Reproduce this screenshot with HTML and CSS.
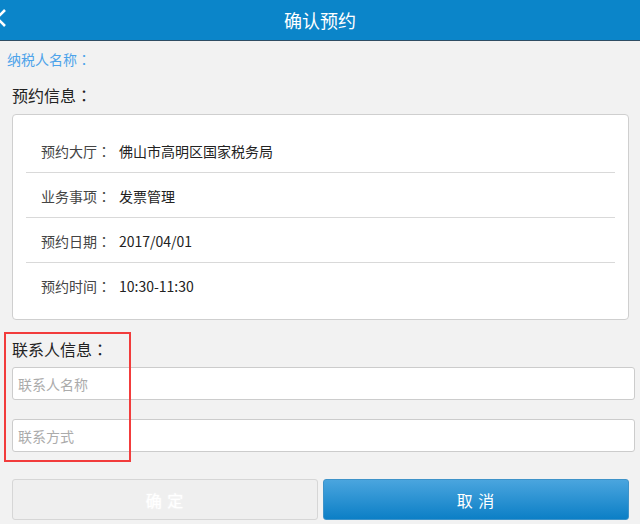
FILE: index.html
```html
<!DOCTYPE html>
<html lang="zh-CN">
<head>
<meta charset="utf-8">
<title>确认预约</title>
<link rel="stylesheet" href="styles.css">
</head>
<body>
<header class="topbar">
  <span class="back">
    <svg width="10" height="40" viewBox="0 0 10 40"><polyline points="5,10 -3,18 5,26" fill="none" stroke="#fff" stroke-width="2.6"/></svg>
  </span>
  <h1 class="title">确认预约</h1>
  <span></span>
</header>
<main class="page">
  <div class="taxpayer">纳税人名称<span class="colon">：</span></div>
  <div class="section-title">预约信息<span class="colon">：</span></div>
  <div class="card">
    <div class="row"><span class="label">预约大厅<span class="colon">：</span></span><span class="value">佛山市高明区国家税务局</span></div>
    <div class="row"><span class="label">业务事项<span class="colon">：</span></span><span class="value">发票管理</span></div>
    <div class="row"><span class="label">预约日期<span class="colon">：</span></span><span class="value">2017/04/01</span></div>
    <div class="row"><span class="label">预约时间<span class="colon">：</span></span><span class="value">10:30-11:30</span></div>
  </div>
  <div class="contact">
    <div class="section-title contact-title">联系人信息<span class="colon">：</span></div>
    <input class="field" type="text" placeholder="联系人名称">
    <input class="field field-second" type="text" placeholder="联系方式">
    <div class="highlight"></div>
  </div>
  <div class="actions">
    <button class="btn btn-ok" type="button">确 定</button>
    <button class="btn btn-cancel" type="button">取 消</button>
  </div>
</main>
</body>
</html>
```
FILE: styles.css
```css
* { box-sizing: border-box; }
html, body {
  margin: 0;
  padding: 0;
  background: #f2f2f2;
  font-family: "Noto Sans CJK SC", "Noto Sans", "Liberation Sans", sans-serif;
  width: 640px;
  height: 524px;
  overflow: hidden;
}
.colon {
  display: inline-block;
  width: 1em;
  text-align: center;
  font-family: "Noto Sans CJK TC", "Noto Sans CJK SC", sans-serif;
  font-feature-settings: "locl" 0;
}
.topbar {
  height: 41px;
  background: #0b85c9;
  border-bottom: 1px solid #2f4d63;
  display: grid;
  grid-template-columns: 40px 1fr 40px;
  align-items: center;
}
.back { display: block; height: 40px; }
.back svg { display: block; }
.title {
  margin: 0;
  text-align: center;
  color: #fff;
  font-size: 18px;
  font-weight: normal;
  line-height: 40px;
}
.page { display: flex; flex-direction: column; }
.taxpayer {
  margin-top: 8px;
  padding-left: 7px;
  font-size: 14px;
  line-height: 20px;
  color: #4da3ea;
}
.section-title {
  margin-top: 15px;
  padding-left: 12px;
  font-size: 16px;
  line-height: 22px;
  color: #222;
}
.card {
  margin: 8px 11px 0 12px;
  background: #fff;
  border: 1px solid #cfcfcf;
  border-radius: 4px;
  padding: 13px 13px 12px;
}
.row {
  height: 45px;
  border-bottom: 1px solid #d9d9d9;
  display: flex;
  align-items: center;
  padding-left: 15px;
  padding-top: 1px;
  font-size: 14px;
}
.row:last-child { border-bottom: none; height: 44px; }
.label { width: 78px; color: #444; }
.value { color: #222; }
.contact {
  position: relative;
  display: flex;
  flex-direction: column;
}
.contact-title { margin-top: 18px; }
.field {
  margin: 7px 5px 0 12px;
  height: 33px;
  border: 1px solid #cccccc;
  border-radius: 3px;
  background: #fff;
  padding: 0 5px;
  font-family: inherit;
  font-size: 14px;
  color: #333;
  outline: none;
}
.field::placeholder { color: #ababab; }
.field-second { margin-top: 19px; }
.highlight {
  position: absolute;
  left: 4px;
  top: 12px;
  width: 127px;
  height: 130px;
  border: 2px solid #f23c3c;
  pointer-events: none;
}
.actions {
  margin: 27px 11px 0 12px;
  display: flex;
  gap: 5px;
}
.btn {
  flex: 1;
  height: 41px;
  border-radius: 3px;
  font-family: inherit;
  font-size: 16px;
  color: #fff;
  letter-spacing: 1px;
}
.btn-ok {
  background: #efefef;
  border: 1px solid #d6d6d6;
  text-shadow: 0 0 2px rgba(255,255,255,0.9);
}
.btn-cancel {
  background: linear-gradient(#4aa5de, #0c7fc6);
  border: 1px solid #3e93c9;
}
```
